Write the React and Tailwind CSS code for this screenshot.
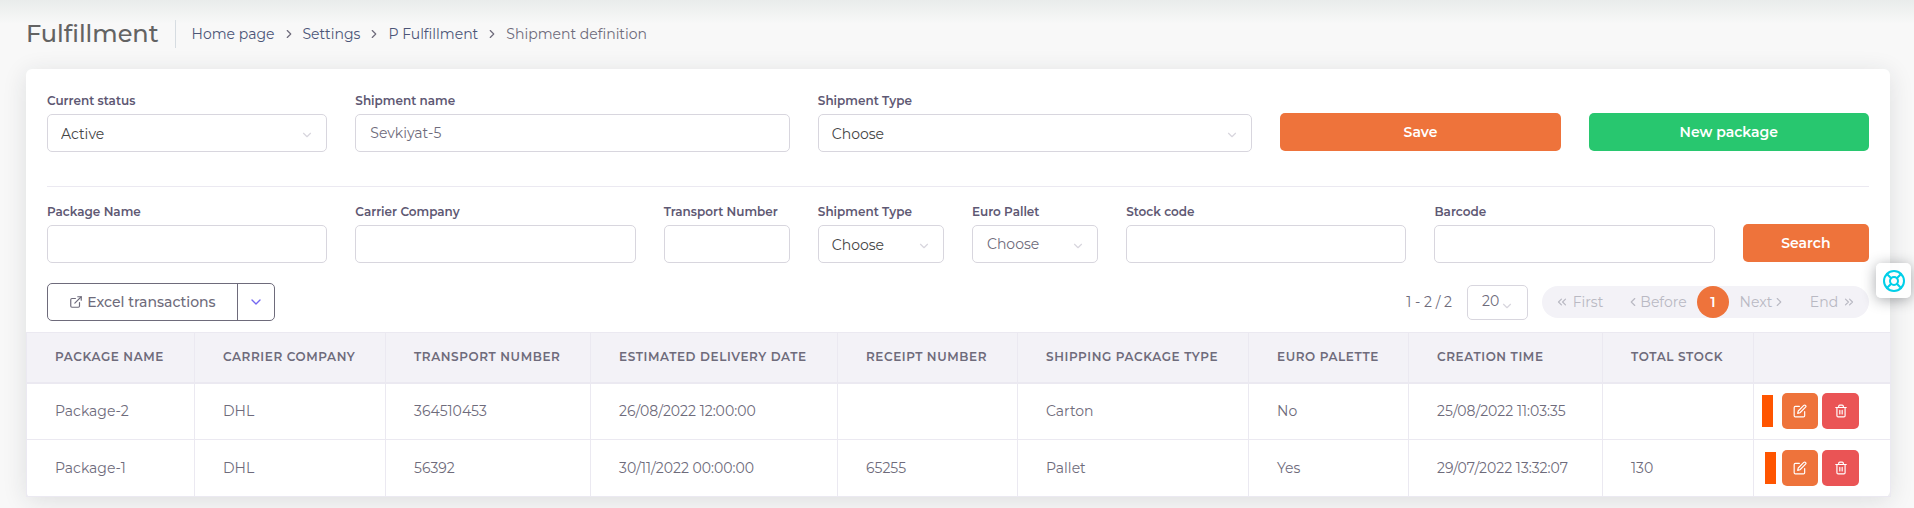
import React from "react";
import {
  ChevronDown, ChevronLeft, ChevronRight, ChevronsLeft, ChevronsRight,
  ExternalLink, LifeBuoy,
} from "lucide-react";
import { FiEdit } from "react-icons/fi";

const labelClass = "block text-[12px] leading-[18px] font-semibold text-[#5e5873] mb-1 whitespace-nowrap";
const boxClass = "block w-full h-[38px] rounded-[5px] border border-[#d8d6de] bg-white text-[14px] leading-5 outline-none";

function TextField({ id, label, span, value = "" }) {
  return (
    <div className={span}>
      <label htmlFor={id} className={labelClass}>{label}</label>
      <input id={id} type="text" defaultValue={value} className={`${boxClass} px-[14px] text-[#6e6b7b]`} />
    </div>
  );
}

function SelectField({ id, label, span, value, tone = "pl-[13px] pt-px text-[#444444]" }) {
  return (
    <div className={span}>
      <label htmlFor={id} className={labelClass}>{label}</label>
      <div className="relative">
        <select id={id} className={`${boxClass} appearance-none ${tone}`}>
          <option>{value}</option>
        </select>
        <ChevronDown className="pointer-events-none absolute right-[13px] top-[14px] size-[14px] text-[#d8d6de]" />
      </div>
    </div>
  );
}

function TrashIcon() {
  return (
    <svg viewBox="0 0 24 24" className="size-[14px]" fill="none" stroke="currentColor" strokeWidth="2" strokeLinecap="round" strokeLinejoin="round" aria-hidden="true">
      <path d="M3 6h18M19 6v14a2 2 0 0 1-2 2H7a2 2 0 0 1-2-2V6m3 0V4a2 2 0 0 1 2-2h4a2 2 0 0 1 2 2v2M10 11v6M14 11v6" />
    </svg>
  );
}

const columns = [
  ["Package Name", "w-[168px]"],
  ["Carrier Company", "w-[191px]"],
  ["Transport Number", "w-[205px]"],
  ["Estimated Delivery Date", "w-[247px]"],
  ["Receipt Number", "w-[180px]"],
  ["Shipping Package Type", "w-[231px]"],
  ["Euro Palette", "w-[160px]"],
  ["Creation Time", "w-[194px]"],
  ["Total Stock", "w-[151px]"],
  ["", "w-[137px]"],
];

const rows = [
  { cells: ["Package-2", "DHL", "364510453", "26/08/2022 12:00:00", "", "Carton", "No", "25/08/2022 11:03:35", ""], marker: "mr-[9px]" },
  { cells: ["Package-1", "DHL", "56392", "30/11/2022 00:00:00", "65255", "Pallet", "Yes", "29/07/2022 13:32:07", "130"], marker: "mr-[6px]" },
];

const crumbs = ["Home page", "Settings", "P Fulfillment"];

export default function App() {
  return (
    <div className="relative min-h-screen overflow-hidden bg-[#f8f8f8] pr-6 pl-[26px] pb-[10px] font-['Montserrat',Inter,sans-serif] text-[14px] leading-5 text-[#6e6b7b]">
      <div className="pointer-events-none absolute inset-x-0 top-0 h-6 bg-linear-to-b from-[#e9eceb] to-[#f8f8f800]" />
      <header className="flex h-[69px] items-center pb-[2px]">
        <h1 className="border-r border-[#d6dce1] pr-4 text-[24px] leading-7 font-medium text-[#636363]">Fulfillment</h1>
        <nav aria-label="Breadcrumb" className="pl-4">
          <ol className="flex items-center">
            {crumbs.map((c) => (
              <li key={c} className="flex items-center">
                <a href="#" className="text-[#4b5577]">{c}</a>
                <ChevronRight className="mx-[7px] size-[14px] text-[#6e6b7b]" />
              </li>
            ))}
            <li>Shipment definition</li>
          </ol>
        </nav>
      </header>

      <main className="rounded-md bg-white shadow-[0_4px_24px_0_rgba(34,41,47,0.12)]">
        <form className="px-[21px] pt-[23px]" onSubmit={(e) => e.preventDefault()}>
          <div className="grid grid-cols-12 items-end gap-x-7">
            <SelectField id="status" label="Current status" span="col-span-2" value="Active" />
            <TextField id="shipment-name" label="Shipment name" span="col-span-3" value="Sevkiyat-5" />
            <SelectField id="shipment-type" label="Shipment Type" span="col-span-3" value="Choose" />
            <button className="col-span-2 mb-px h-[38px] rounded-[5px] bg-[#ee733b] text-[14px] font-semibold text-white">Save</button>
            <button type="button" className="col-span-2 mb-px h-[38px] rounded-[5px] bg-[#28c76f] text-[14px] font-semibold text-white">New package</button>
          </div>
        </form>
        <form className="mx-[21px] mt-[34px] border-t border-[#ebe9f1] pt-4" onSubmit={(e) => e.preventDefault()}>
          <div className="grid grid-cols-12 items-end gap-x-7">
            <TextField id="package-name" label="Package Name" span="col-span-2" />
            <TextField id="carrier" label="Carrier Company" span="col-span-2" />
            <TextField id="transport" label="Transport Number" span="col-span-1" />
            <SelectField id="type-filter" label="Shipment Type" span="col-span-1" value="Choose" />
            <SelectField id="pallet" label="Euro Pallet" span="col-span-1" value="Choose" tone="pl-[14px] pb-px text-[#6e6b7b]" />
            <TextField id="stock" label="Stock code" span="col-span-2" />
            <TextField id="barcode" label="Barcode" span="col-span-2" />
            <button className="mb-px h-[38px] rounded-[5px] bg-[#ee733b] text-[14px] font-semibold text-white">Search</button>
          </div>
        </form>

        <div className="flex items-center justify-between px-[21px] pt-5 pb-[11px]">
          <div className="flex h-[38px] rounded-[5px] border border-[#6e6b7b]">
            <button className="flex w-[190px] items-center justify-center gap-1 border-r border-[#6e6b7b] font-medium">
              <ExternalLink className="size-[14px]" />
              Excel transactions
            </button>
            <button aria-label="More export options" className="flex w-9 items-center justify-center text-[#7367f0]">
              <ChevronDown className="size-4" />
            </button>
          </div>
          <div className="flex items-center">
            <span className="mr-[15px]">1 - 2 / 2</span>
            <div className="relative mr-[14px]">
              <select aria-label="Rows per page" className="block h-[35px] w-[61px] appearance-none rounded-[5px] border border-[#d8d6de] bg-white pb-[2px] pl-[14px]">
                <option>20</option>
              </select>
              <ChevronDown className="pointer-events-none absolute right-[14px] top-[14px] size-[14px] text-[#d8d6de]" />
            </div>
            <nav aria-label="Pagination" className="flex h-8 w-[327px] items-center rounded-full bg-[#f3f2f7] text-[#b9b9c3]">
              <button disabled className="flex w-[74px] items-center justify-center gap-1"><ChevronsLeft className="size-[14px]" />First</button>
              <button disabled className="flex w-[81px] items-center justify-center"><ChevronLeft className="size-[14px]" />Before</button>
              <button aria-current="page" className="size-8 rounded-full bg-[#ee733b] text-[14px] font-semibold text-white">1</button>
              <button disabled className="flex w-[68px] items-center justify-center">Next<ChevronRight className="size-[14px]" /></button>
              <button disabled className="flex flex-1 items-center justify-center gap-1">End<ChevronsRight className="size-[14px]" /></button>
            </nav>
          </div>
        </div>

        <table className="w-full table-fixed border-collapse border border-[#ebe9f1]">
          <thead>
            <tr className="h-[50px] border-b-2 border-[#ebe9f1] bg-[#f3f2f7]">
              {columns.map(([name, width]) => (
                <th key={name} scope="col" className={`${width} border-r border-[#ebe9f1] pl-7 text-left text-[12px] font-semibold tracking-wider whitespace-nowrap uppercase`}>
                  {name}
                </th>
              ))}
            </tr>
          </thead>
          <tbody>
            {rows.map((row) => (
              <tr key={row.cells[0]} className="h-[57px] border-b border-[#ebe9f1]">
                {row.cells.map((cell, i) => (
                  <td key={i} className="border-r border-[#ebe9f1] pl-7 whitespace-nowrap">{cell}</td>
                ))}
                <td className="pr-[31px]">
                  <div className="flex items-center justify-end">
                    <span className={`${row.marker} h-8 w-[11px] bg-[#ff5500]`} />
                    <button aria-label="Edit" className="mr-1 flex h-9 w-9 items-center justify-center rounded-[5px] bg-[#ee733b] text-white"><FiEdit className="size-[14px]" /></button>
                    <button aria-label="Delete" className="flex h-9 w-[37px] items-center justify-center rounded-[5px] bg-[#ea5455] text-white"><TrashIcon /></button>
                  </div>
                </td>
              </tr>
            ))}
          </tbody>
        </table>
      </main>

      <button aria-label="Help" className="fixed top-[263px] right-[3px] flex size-[35px] items-center justify-center rounded-[5px] bg-white/85 text-[#00cfe8] shadow-[0_2px_14px_rgba(34,41,47,0.4)]">
        <LifeBuoy className="size-6" />
      </button>
    </div>
  );
}
